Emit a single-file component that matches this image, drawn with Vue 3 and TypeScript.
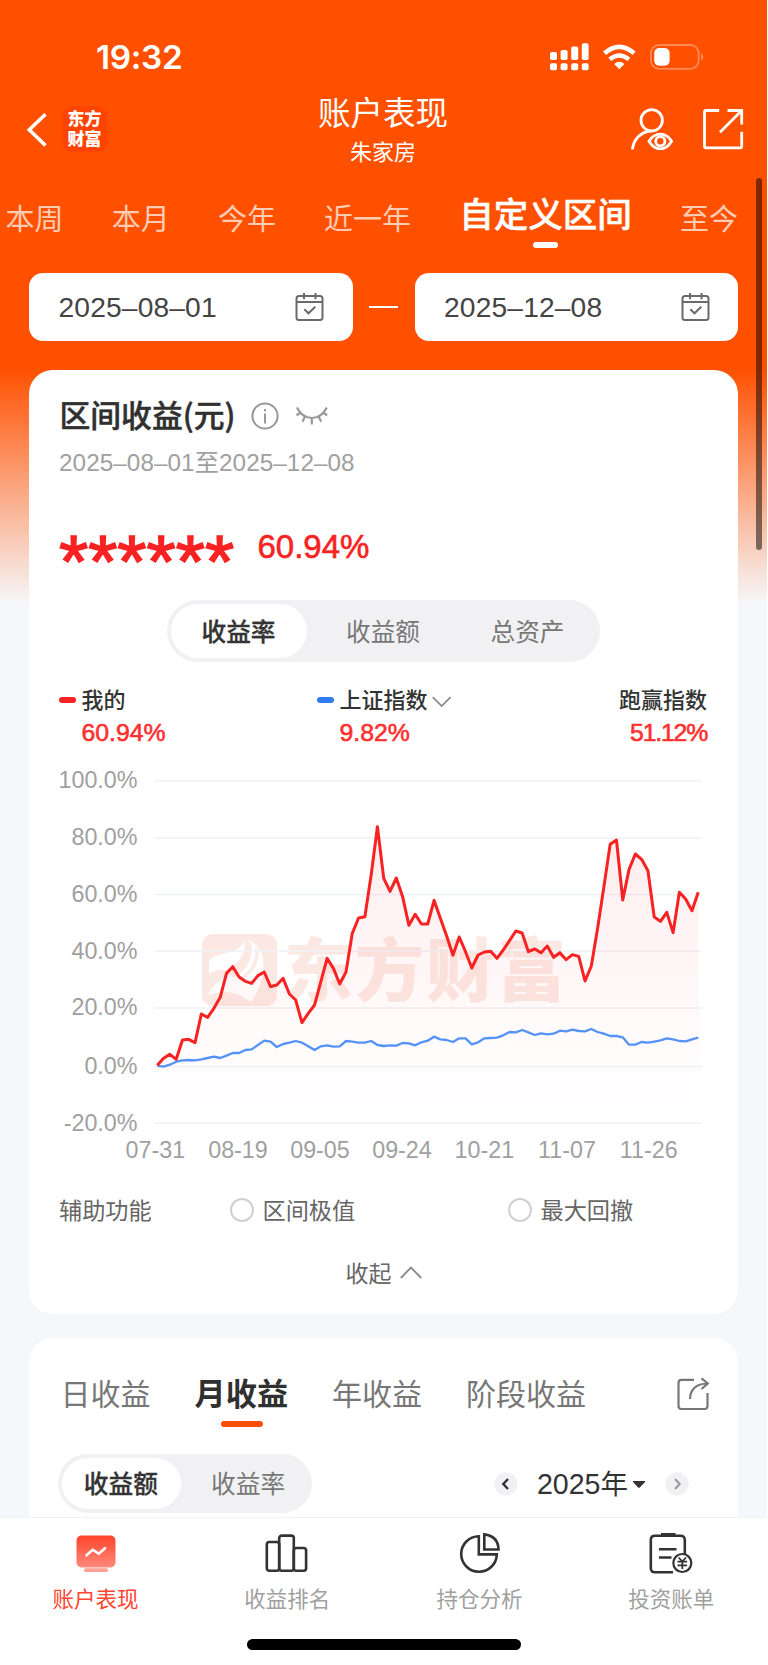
<script setup lang="ts">
interface Tick { label: string; y: number }
interface DateTick { label: string; x: number }

const periods: string[] = ['本周', '本月', '今年', '近一年', '自定义区间', '至今']
const activePeriod = '自定义区间'
const dates: string[] = ['2025–08–01', '2025–12–08']
const metrics: string[] = ['收益率', '收益额', '总资产']
const ranges: string[] = ['日收益', '月收益', '年收益', '阶段收益']

const yTicks: Tick[] = [
  { label: '100.0%', y: 781 },
  { label: '80.0%', y: 838 },
  { label: '60.0%', y: 894.5 },
  { label: '40.0%', y: 951.3 },
  { label: '20.0%', y: 1008 },
  { label: '0.0%', y: 1066.5 },
  { label: '-20.0%', y: 1123.3 },
]
const xTicks: DateTick[] = [
  { label: '07-31', x: 155.3 },
  { label: '08-19', x: 238 },
  { label: '09-05', x: 320 },
  { label: '09-24', x: 402 },
  { label: '10-21', x: 484.3 },
  { label: '11-07', x: 567 },
  { label: '11-26', x: 648.8 },
]

const mine: number[] = [
  826, 805, 793, 808, 750, 748, 758, 672, 682, 655, 622, 550, 530, 561, 574, 580, 557, 546, 590, 585,
  565, 612, 630, 698, 670, 645, 575, 505, 535, 582, 546, 430, 384, 380, 255, 110, 265, 304, 264, 320,
  406, 373, 402, 402, 331, 385, 438, 496, 441, 485, 534, 495, 486, 484, 505, 480, 452, 423, 429, 485,
  477, 488, 468, 502, 488, 509, 494, 499, 573, 528, 415, 290, 163, 150, 330, 238, 192, 208, 242, 381,
  394, 367, 428, 307, 327, 362, 307,
]
const index: number[] = [
  827, 830, 824, 815, 811, 810, 811, 808, 804, 800, 804, 797, 789, 789, 780, 778, 765, 752, 755, 771,
  762, 758, 753, 758, 769, 780, 769, 766, 770, 769, 753, 755, 758, 758, 753, 765, 768, 766, 767, 759,
  760, 766, 757, 752, 740, 748, 750, 756, 745, 745, 763, 757, 745, 744, 743, 736, 726, 727, 720, 727,
  735, 730, 733, 731, 722, 724, 719, 723, 724, 717, 726, 731, 738, 738, 742, 764, 764, 756, 758, 755,
  751, 745, 748, 753, 754, 748, 743,
]
const toPoints = (values: number[]): string =>
  values.map((v, i) => `${(157.3 + i * 6.29).toFixed(2)},${(790 + v / 3).toFixed(2)}`).join(' ')
const minePoints = toPoints(mine)
const indexPoints = toPoints(index)
const areaPoints = `157,1123 ${minePoints} 698.5,1123`
</script>

<template>
  <div class="screen">
    <div class="status">
      <span class="clock">19:32</span>
      <svg class="signals" width="160" height="32" viewBox="546 41 160 32" fill="#fff">
        <rect x="550" y="52" width="7" height="8" rx="1.8" /><rect x="560.6" y="50" width="7" height="10" rx="1.8" />
        <rect x="571.2" y="46.5" width="7" height="13.5" rx="1.8" /><rect x="581.8" y="43.3" width="6.8" height="16.7" rx="1.8" />
        <rect x="550" y="63.3" width="7" height="7" rx="1.8" /><rect x="560.6" y="63.3" width="7" height="7" rx="1.8" />
        <rect x="571.2" y="63.3" width="7" height="7" rx="1.8" /><rect x="581.8" y="63.3" width="6.8" height="7" rx="1.8" />
        <path d="M604.5 53.2Q619.3 40.6 634.1 53.2" fill="none" stroke="#fff" stroke-width="4.6" />
        <path d="M609.7 59.4Q619.3 51.5 628.9 59.4" fill="none" stroke="#fff" stroke-width="4.4" />
        <path d="M614.2 63.9Q619.3 59.4 624.4 63.9L619.3 69.3Z" />
        <rect x="651" y="45" width="47.6" height="23.8" rx="8" fill="none" stroke="#ff8a55" stroke-width="1.8" />
        <rect x="654.2" y="48" width="15.4" height="17.8" rx="5" />
        <path d="M701 53.3Q703.3 54.5 703.3 57T701 60.6Z" fill="#ff8a55" />
      </svg>
    </div>

    <header class="nav">
      <div class="nav-left">
        <svg class="back" width="22" height="38" viewBox="26 111 22 38" fill="none" stroke="#fff" stroke-width="3.6">
          <path d="M45.5 114.3L29.3 129.8L45.5 145.5" />
        </svg>
        <div class="logo"><span>东方</span><span>财富</span></div>
      </div>
      <div class="heading">
        <h1>账户表现</h1>
        <p>朱家房</p>
      </div>
      <svg class="nav-icons" width="116" height="46" viewBox="629 106 116 46" fill="none" stroke="#fff" stroke-width="2.8">
        <circle cx="651.7" cy="120.3" r="10.7" />
        <path d="M632.4 149.3C633.5 140 640.5 131.4 651 131" />
        <path d="M649 141.2Q653.5 134.2 660.3 134.2T671.6 141.2Q667 148.8 660.3 148.8T649 141.2Z" />
        <circle cx="660.3" cy="141.2" r="4.6" />
        <path d="M719.2 110.5H706Q704.5 110.5 704.5 112V146Q704.5 147.8 706.3 147.8H740Q741.7 147.8 741.7 146V131.7M727.5 110.5H741.7V124.5M741.7 110.5L720 132.3" />
      </svg>
    </header>

    <nav class="periods">
      <span v-for="p in periods" :key="p" :class="{ active: p === activePeriod }">{{ p }}</span>
    </nav>

    <div class="dates">
      <template v-for="(d, i) in dates" :key="d">
        <i v-if="i === 1" class="dash"></i>
        <div class="date">
          <span>{{ d }}</span>
          <svg width="30" height="30" viewBox="0 0 30 30" fill="none" stroke="#6a6a6a" stroke-width="2">
            <rect x="1.5" y="4" width="26" height="24" rx="2.5" />
            <path d="M2 10H27.5M9 1V7.2M20.5 1V7.2M9.3 17.2L13.5 21.3L20.3 14.8" />
          </svg>
        </div>
      </template>
    </div>

    <section class="card">
      <div class="card-title">
        <h2>区间收益(元)</h2>
        <svg width="28" height="28" viewBox="0 0 28 28" fill="none" stroke="#999" stroke-width="2">
          <circle cx="14" cy="14" r="12.6" /><path d="M14 11.5V21.5M14 7V9.3" />
        </svg>
        <svg class="eye" width="34" height="22" viewBox="294 405 34 22" fill="none" stroke="#999" stroke-width="2.2">
          <path d="M297 407.5Q302 418 311.8 418T326.8 407.5M300.5 412.8L296.5 415.3M305 416.4L302.5 421.7M311.8 418V424.5M318.6 416.4L321.2 421.7M323.2 412.8L327.2 415.3" />
        </svg>
      </div>
      <p class="span">2025–08–01<b>至</b>2025–12–08</p>
      <div class="total"><span class="mask">******</span><span class="rate">60.94%</span></div>

      <div class="segment">
        <span v-for="(m, i) in metrics" :key="m" :class="{ on: i === 0 }">{{ m }}</span>
      </div>

      <div class="legend">
        <div class="entry">
          <div class="name"><i class="red"></i>我的</div>
          <div class="value">60.94%</div>
        </div>
        <div class="entry second">
          <div class="name"><i class="blue"></i>上证指数
            <svg width="20" height="12" viewBox="0 0 20 12" fill="none" stroke="#888" stroke-width="1.7"><path d="M.8 1.2L9.7 10L18.6 1.2" /></svg>
          </div>
          <div class="value">9.82%</div>
        </div>
        <div class="entry beat">
          <div class="name">跑赢指数</div>
          <div class="value narrow">51.12%</div>
        </div>
      </div>

      <svg class="chart" width="651" height="405" viewBox="58 760 651 405">
        <defs>
          <linearGradient id="area" gradientUnits="userSpaceOnUse" x1="0" y1="826" x2="0" y2="1123">
            <stop offset="0" stop-color="#f5222d" stop-opacity=".08" />
            <stop offset=".8" stop-color="#f5222d" stop-opacity=".012" />
            <stop offset="1" stop-color="#f5222d" stop-opacity=".004" />
          </linearGradient>
        </defs>
        <g class="watermark">
          <path fill-rule="evenodd" d="M214 934H265Q277 934 277 946V994Q277 1006 265 1006H214Q202 1006 202 994V946Q202 934 214 934ZM209 961C216 951 238 956 245 940C245 958 236 966 226 970C218 969 211 972 209 974ZM249 940C254 960 240 972 230 975C221 978 214 984 208 995C225 989 238 992 251 1002C258 993 265 976 263 957C261 949 255 943 249 940Z" />
          <path d="M250 943C252 960 243 972 232 976M256 948C260 962 250 974 240 979" fill="none" stroke="#fbdccf" stroke-width="3" />
          <text x="284" y="996" textLength="282">东方财富</text>
        </g>
        <path v-for="t in yTicks" :key="t.label" class="grid" :d="`M154 ${t.y}H702`" />
        <polygon :points="areaPoints" fill="url(#area)" />
        <polyline :points="indexPoints" fill="none" stroke="#5592f7" stroke-width="2.3" stroke-linejoin="round" />
        <polyline :points="minePoints" fill="none" stroke="#f82222" stroke-width="3" stroke-linejoin="round" />
        <text v-for="t in yTicks" :key="'y' + t.label" class="tick" x="137.5" :y="t.y + 7.4" text-anchor="end">{{ t.label }}</text>
        <text v-for="t in xTicks" :key="t.label" class="tick" :x="t.x" y="1158.3" text-anchor="middle">{{ t.label }}</text>
      </svg>

      <div class="aux">
        <span class="aux-name">辅助功能</span>
        <label><i></i><span>区间极值</span></label>
        <label><i></i><span>最大回撤</span></label>
      </div>
      <div class="fold">收起
        <svg width="22" height="13" viewBox="0 0 22 13" fill="none" stroke="#888" stroke-width="1.8"><path d="M.8 12L11 1.5L21.2 12" /></svg>
      </div>
    </section>

    <section class="card earnings">
      <div class="ranges">
        <span v-for="(r, i) in ranges" :key="r" :class="{ active: i === 1 }">{{ r }}</span>
        <svg width="34" height="34" viewBox="676 1377 34 34" fill="none" stroke="#777" stroke-width="2.2">
          <path d="M694 1379.8H681.5Q678.5 1379.8 678.5 1383V1406Q678.5 1409 681.5 1409H704.5Q707.5 1409 707.5 1406V1393M690 1399Q690.5 1384 707.5 1383.5M701.5 1378.3L707.8 1383.5L701.5 1389" />
        </svg>
      </div>
      <div class="filter">
        <div class="segment small"><span class="on">收益额</span><span>收益率</span></div>
        <div class="year">
          <svg width="24" height="24" viewBox="0 0 24 24" fill="none"><circle cx="12" cy="12" r="11.7" fill="#f1f1f4" /><path d="M14 7L9.3 12L14 17" stroke="#333" stroke-width="2.4" /></svg>
          <span class="label">2025<b>年</b></span>
          <svg class="caret" width="12" height="7" viewBox="0 0 12 7"><path d="M0 0H12V1L6.8 6.4Q6 7 5.2 6.4L0 1Z" fill="#333" /></svg>
          <svg width="24" height="24" viewBox="0 0 24 24" fill="none"><circle cx="12" cy="12" r="11.7" fill="#f1f1f4" /><path d="M10 7L14.7 12L10 17" stroke="#999" stroke-width="2" /></svg>
        </div>
      </div>
    </section>

    <footer class="tabbar">
      <div class="tab current">
        <svg width="44" height="44" viewBox="0 0 44 44" fill="none">
          <defs><linearGradient id="mon" x1="0" y1="0" x2="0" y2="1"><stop offset="0" stop-color="#ff4228" /><stop offset="1" stop-color="#ff8b7c" /></linearGradient></defs>
          <rect x="2.5" y="3.5" width="39" height="32" rx="5" fill="url(#mon)" />
          <rect x="10" y="36.3" width="24" height="3.8" rx="1.9" fill="#ffa092" />
          <path d="M12.5 23.3L18.8 17.7L24.8 21.8L31 16.2" stroke="#fff" stroke-width="2.6" stroke-linecap="round" stroke-linejoin="round" />
        </svg>
        <span>账户表现</span>
      </div>
      <div class="tab">
        <svg width="44" height="44" viewBox="0 0 44 44" fill="none" stroke="#333" stroke-width="2.6">
          <rect x="1.8" y="10" width="12.4" height="28.8" rx="2.5" /><rect x="14.2" y="3.6" width="14.6" height="35.2" rx="2.5" /><rect x="28.8" y="16" width="12.3" height="22.8" rx="2.5" />
        </svg>
        <span>收益排名</span>
      </div>
      <div class="tab">
        <svg width="44" height="44" viewBox="0 0 44 44" fill="none" stroke="#333" stroke-width="2.6">
          <path d="M20.8 4.2A17.8 17.8 0 1 0 38.8 22.4H20.8Z" /><path d="M26.3 2.4Q40.3 4.3 40.5 17.5H26.3Z" />
        </svg>
        <span>持仓分析</span>
      </div>
      <div class="tab">
        <svg width="44" height="44" viewBox="0 0 44 44" fill="none" stroke="#333" stroke-width="2.6">
          <path d="M24 40.3H6Q1.8 40.3 1.8 36V8Q1.8 3.7 6 3.7H31.5Q35.8 3.7 35.8 8V22M10 17.2H27.5M10 25.5H22.5" /><path d="M12 2.8H26.5" stroke-width="3.6" />
          <circle cx="33.3" cy="31" r="9" fill="#fff" stroke-width="2.2" /><path d="M29.7 25.5L33.3 29.5L37 25.5M28.5 29.7H38.1M28.5 33.3H38.1M33.3 29.5V37" stroke-width="1.8" />
        </svg>
        <span>投资账单</span>
      </div>
      <i class="home"></i>
    </footer>
    <i class="scrollbar"></i>
  </div>
</template>

<style>
body { margin: 0; background: #fff; }
</style>

<style scoped>
.screen {
  position: relative;
  width: 767px;
  height: 1665px;
  overflow: hidden;
  display: flex;
  flex-direction: column;
  box-sizing: border-box;
  background: linear-gradient(#ff5000 0, #ff5000 368px, #f6f7fa 604px);
  font-family: "Liberation Sans", "Noto Sans CJK SC", sans-serif;
  color: #333;
}
h1, h2, p { margin: 0; font-weight: 400; }
i { display: block; flex: none; }
svg { display: block; flex: none; }
.status { height: 90px; flex: none; display: flex; box-sizing: border-box; padding: 41px 61px 0 96px; justify-content: space-between; }
.clock { font: 600 33.3px/33px Inter, sans-serif; color: #fff; letter-spacing: -.3px; }
.nav { height: 90px; flex: none; display: grid; grid-template-columns: 259px 1fr 260px; color: #fff; }
.nav-left { display: flex; padding: 16px 0 0 26px; }
.back { margin-top: 5px; }
.logo { width: 45px; height: 46px; margin-left: 14px; border-radius: 10px; background: #ff4300; display: flex; flex-direction: column; align-items: center; justify-content: center; box-sizing: border-box; padding-bottom: 3px; }
.logo span { font: 900 17px/19.5px "Noto Sans CJK SC", sans-serif; }
.heading { text-align: center; font-family: "Noto Sans CJK SC", sans-serif; }
.heading h1 { font-size: 32.5px; line-height: 46px; margin-top: -2px; }
.heading p { font-size: 22px; line-height: 30px; margin-top: 1px; }
.nav-icons { justify-self: end; margin: 16px 22px 0 0; }
.periods { height: 93px; flex: none; display: flex; gap: 48.2px; padding-left: 5.5px; box-sizing: border-box; font: 400 29px/74px "Noto Sans CJK SC", sans-serif; color: #ffcbb3; white-space: nowrap; }
.periods .active { position: relative; font-size: 34.5px; line-height: 64px; font-weight: 500; color: #fff; -webkit-text-stroke: .5px #fff; }
.periods .active::after { content: ""; position: absolute; left: 74px; top: 62px; width: 25px; height: 6px; border-radius: 3px; background: #fff; }
.dates { height: 68px; flex: none; margin: 0 29px; display: flex; align-items: center; justify-content: space-between; }
.date { width: 323.5px; height: 68px; border-radius: 14px; background: #fff; box-sizing: border-box; padding: 0 27.5px 0 29.5px; display: flex; align-items: center; justify-content: space-between; font-size: 28.2px; letter-spacing: .15px; color: #444; }
.dash { width: 29px; height: 2px; background: #fff; }
.card { flex: none; height: 943.5px; margin: 29px 29px 0; border-radius: 24px; background: #fff; box-sizing: border-box; padding: 0 29px; display: flex; flex-direction: column; }
.card-title { display: flex; align-items: center; height: 46px; margin-top: 23px; }
.card-title h2 { font: 500 30.8px/46px "Noto Sans CJK SC", sans-serif; width: 178px; white-space: nowrap; margin: -4px 13.5px 0 1.5px; color: #303030; -webkit-text-stroke: .5px #303030; }
.card-title .eye { margin-left: 15px; }
.span { font-size: 24.3px; line-height: 32px; margin: 8px 0 0 1px; color: #a0a0a0; white-space: nowrap; letter-spacing: .05px; }
.span b, .year b { font-family: "Noto Sans CJK SC", sans-serif; font-weight: 400; line-height: 1; }
.total { display: flex; height: 50px; margin-top: 38px; padding-left: 1px; color: #f82222; }
.mask { width: 198.5px; font-size: 75px; line-height: 88px; letter-spacing: 0; white-space: nowrap; -webkit-text-stroke: 1.5px #f82222; }
.rate { font-size: 33px; line-height: 59px; -webkit-text-stroke: .6px #f82222; }
.segment { width: 433px; height: 62px; margin: 33px 0 0 109px; flex: none; box-sizing: border-box; padding: 4px; border-radius: 31px; background: #f1f1f4; display: flex; gap: 8.5px; font: 400 24.7px/52px "Noto Sans CJK SC", sans-serif; color: #777; }
.segment span { flex: 1; text-align: center; border-radius: 27px; text-indent: -1px; }
.segment .on { background: #fff; color: #333; font-weight: 500; -webkit-text-stroke: .3px #333; }
.legend { display: flex; margin: 17px 0 0 1px; height: 81px; flex: none; }
.entry { width: 258px; }
.entry.beat { width: 133px; text-align: right; }
.name { display: flex; align-items: center; font: 500 22px/38px "Noto Sans CJK SC", sans-serif; color: #333; white-space: nowrap; }
.name i { width: 17px; height: 6.5px; border-radius: 3px; margin: 4px 5.5px 0 0; }
.name svg { margin-left: 4px; margin-top: 8px; }
.beat .name { justify-content: flex-end; margin-right: 1px; }
.red { background: #f82222; }
.blue { background: #337cf0; }
.value { margin-left: 22.5px; font-size: 24.8px; line-height: 32px; color: #ff3030; -webkit-text-stroke: .6px #ff3030; }
.value.narrow { letter-spacing: -1.2px; margin-right: 1px; }
.chart { height: 405px; }
.grid { stroke: #f0f1f6; stroke-width: 1.6; }
.tick { font: 23.3px "Liberation Sans", Arial, sans-serif; fill: #a0a0a0; }
.watermark { fill: #fbdacf; opacity: .6; }
.watermark text { font: 900 69px "Noto Sans CJK SC", sans-serif; }
.aux { display: flex; align-items: center; height: 40px; margin-top: 25px; padding-left: 1px; flex: none; font: 400 23.2px/40px "Noto Sans CJK SC", sans-serif; color: #666; }
.aux-name { width: 170.5px; }
.aux span { margin-top: -2.5px; }
.aux label { display: flex; align-items: center; width: 278px; white-space: nowrap; }
.aux label i { width: 20px; height: 20px; border: 2px solid #d0d0d0; border-radius: 50%; margin-right: 9px; }
.aux label:last-child { width: 120px; }
.fold { display: flex; align-items: center; margin: 22px 0 0 287.5px; font: 400 23px/40px "Noto Sans CJK SC", sans-serif; color: #666; }
.fold svg { margin-left: 8.5px; }
.earnings { margin-top: 24.5px; height: 240px; }
.ranges { display: flex; height: 90px; padding: 29.5px 0 0 2.5px; box-sizing: border-box; font: 400 30px/48px "Noto Sans CJK SC", sans-serif; color: #777; white-space: nowrap; }
.ranges span { margin-right: 44px; }
.ranges .active { position: relative; font-size: 31.2px; font-weight: 700; color: #303030; }
.ranges .active::after { content: ""; position: absolute; left: 26px; top: 53px; width: 42px; height: 6.5px; border-radius: 3px; background: #ff5000; }
.ranges svg { margin: 9.5px -1px 0 auto; }
.filter { display: flex; justify-content: space-between; margin-top: 26px; height: 60px; }
.small { width: 254px; height: 59px; margin: 0; line-height: 49px; }
.year { display: flex; align-items: center; margin-right: 20px; }
.label { margin-left: 19px; font-size: 28.6px; line-height: 40px; white-space: nowrap; }
.label b { font-size: 27.5px; }
.caret { margin: 0 20px 0 5px; }
.tabbar { position: absolute; left: 0; right: 0; bottom: 0; height: 148px; background: #fff; border-top: 1.5px solid #f1f2f5; box-sizing: border-box; display: grid; grid-template-columns: 191px 192.5px 192px 191.5px; }
.tab { display: flex; flex-direction: column; align-items: center; padding-top: 13.5px; font: 400 21.5px/36px "Noto Sans CJK SC", sans-serif; color: #a0a0a0; }
.tab span { margin-top: 4.5px; }
.current { color: #ff4530; }
.home { position: absolute; left: 247px; bottom: 15.5px; width: 274px; height: 10.5px; border-radius: 6px; background: #000; }
.scrollbar { position: absolute; left: 755.5px; top: 178px; width: 6px; height: 372px; border-radius: 3px; background: rgba(0, 0, 0, .5); }
</style>
